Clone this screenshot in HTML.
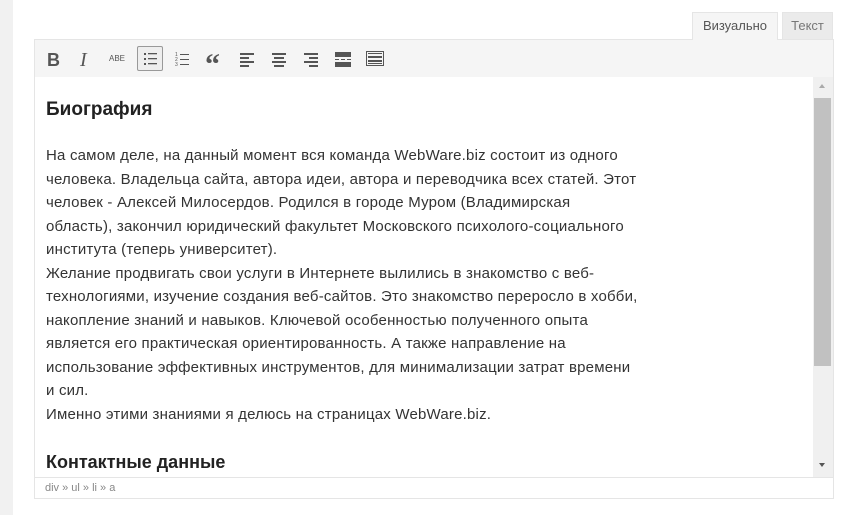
<!DOCTYPE html>
<html><head><meta charset="utf-8"><style>
body{margin:0;width:853px;height:515px;background:#fff;position:relative;overflow:hidden;font-family:"Liberation Sans",sans-serif}
.strip{position:absolute;left:0;top:0;width:13px;height:515px;background:#f1f1f1}
.tab{position:absolute;top:12px;height:27px;border:1px solid #e5e5e5;border-bottom:none;font-size:13px;color:#555;line-height:26px;text-align:center;box-sizing:border-box}
.box{position:absolute;left:34px;top:39px;width:800px;height:460px;border:1px solid #e5e5e5;box-sizing:border-box}
.tb{position:absolute;left:0;top:0;width:798px;height:37px;background:#f5f5f5;border-bottom:1px solid #dcdcdc}
.ic{position:absolute;top:9px;width:20px;height:20px;color:#555}
.content{position:absolute;left:0;top:37px;width:778px;height:400px;overflow:hidden;background:#fff}
.content div{position:absolute;left:11px;font-size:15px;letter-spacing:0.2px;color:#333;line-height:23.5px;white-space:nowrap}
h2{position:absolute;left:11px;margin:0;font-size:19px;color:#222;font-weight:bold}
.sb{position:absolute;left:778px;top:37px;width:20px;height:400px;background:#f0f0f0}
.st{position:absolute;left:0;top:437px;width:798px;height:21px;border-top:1px solid #e5e5e5;font-size:11px;color:#888;line-height:21px;padding-left:10px;box-sizing:border-box}
</style></head><body>
<div class="strip"></div>
<div class="tab" style="left:692px;width:86px;background:#f5f5f5;z-index:2;height:28px">Визуально</div>
<div class="tab" style="left:782px;width:51px;background:#ebebeb;color:#777">Текст</div>
<div class="box">
<div class="tb">
<div class="ic" style="left:12px;font-weight:bold;font-size:18px;line-height:22px">B</div>
<div class="ic" style="left:45px;font-style:italic;font-family:'Liberation Serif',serif;font-size:20px;line-height:22px">I</div>
<div class="ic" style="left:74px;font-size:8px;line-height:20px">ABE</div>
<div class="ic" style="left:102px;top:6px;width:26px;height:25px;border:1px solid #999;background:#eee;box-sizing:border-box;border-radius:2px"><svg width="24" height="23"><g fill="#555"><rect x="6" y="6" width="2" height="2"/><rect x="6" y="11" width="2" height="2"/><rect x="6" y="16" width="2" height="2"/><rect x="10" y="6" width="9" height="1.3"/><rect x="10" y="11" width="9" height="1.3"/><rect x="10" y="16" width="9" height="1.3"/></g></svg></div>
<div class="ic" style="left:138px"><svg width="20" height="20"><g fill="#555"><rect x="7" y="5" width="9" height="1"/><rect x="7" y="10" width="9" height="1"/><rect x="7" y="15" width="9" height="1"/><text x="2" y="7" font-size="5">1</text><text x="2" y="12" font-size="5">2</text><text x="2" y="17" font-size="5">3</text></g></svg></div>
<div class="ic" style="left:170px;font-weight:bold;font-size:30px;line-height:32px;font-family:'Liberation Serif',serif">“</div>
<div class="ic" style="left:202px"><svg width="20" height="20"><g fill="#555"><rect x="3" y="4" width="14" height="2"/><rect x="3" y="8" width="9" height="2"/><rect x="3" y="12" width="14" height="2"/><rect x="3" y="16" width="9" height="2"/></g></svg></div>
<div class="ic" style="left:234px"><svg width="20" height="20"><g fill="#555"><rect x="3" y="4" width="14" height="2"/><rect x="5" y="8" width="10" height="2"/><rect x="3" y="12" width="14" height="2"/><rect x="5" y="16" width="10" height="2"/></g></svg></div>
<div class="ic" style="left:266px"><svg width="20" height="20"><g fill="#555"><rect x="3" y="4" width="14" height="2"/><rect x="8" y="8" width="9" height="2"/><rect x="3" y="12" width="14" height="2"/><rect x="8" y="16" width="9" height="2"/></g></svg></div>
<div class="ic" style="left:298px"><svg width="20" height="20"><g fill="#555"><rect x="2" y="3" width="16" height="5"/><rect x="2" y="10" width="4" height="1"/><rect x="8" y="10" width="4" height="1"/><rect x="14" y="10" width="4" height="1"/><rect x="2" y="13" width="16" height="5"/></g></svg></div>
<div class="ic" style="left:330px"><svg width="20" height="20"><rect x="1.5" y="2.5" width="17" height="14" fill="none" stroke="#555"/><g fill="#555"><rect x="3" y="4" width="14" height="1"/><rect x="3" y="7" width="14" height="2"/><rect x="3" y="11" width="14" height="2"/><rect x="3" y="14" width="14" height="1"/></g></svg></div>
</div>
<div class="content">
<h2 style="top:22px">Биография</h2>
<div style="top:67px">На самом деле, на данный момент вся команда WebWare.biz состоит из одного<br>человека. Владельца сайта, автора идеи, автора и переводчика всех статей. Этот<br>человек - Алексей Милосердов. Родился в городе Муром (Владимирская<br>область), закончил юридический факультет Московского психолого-социального<br>института (теперь университет).<br>Желание продвигать свои услуги в Интернете вылились в знакомство с веб-<br>технологиями, изучение создания веб-сайтов. Это знакомство переросло в хобби,<br>накопление знаний и навыков. Ключевой особенностью полученного опыта<br>является его практическая ориентированность. А также направление на<br>использование эффективных инструментов, для минимализации затрат времени<br>и сил.<br>Именно этими знаниями я делюсь на страницах WebWare.biz.</div>
<h2 style="top:375px;font-size:18px">Контактные данные</h2>
</div>
<div class="sb"><div style="position:absolute;left:1px;top:21px;width:17px;height:268px;background:#c1c1c1"></div>
<div style="position:absolute;left:6px;top:7px;border:3px solid transparent;border-bottom:4px solid #aaa;border-top:none"></div>
<div style="position:absolute;left:6px;top:386px;border:3px solid transparent;border-top:4px solid #555;border-bottom:none"></div></div>
<div class="st">div » ul » li » a</div>
</div>
</body></html>
